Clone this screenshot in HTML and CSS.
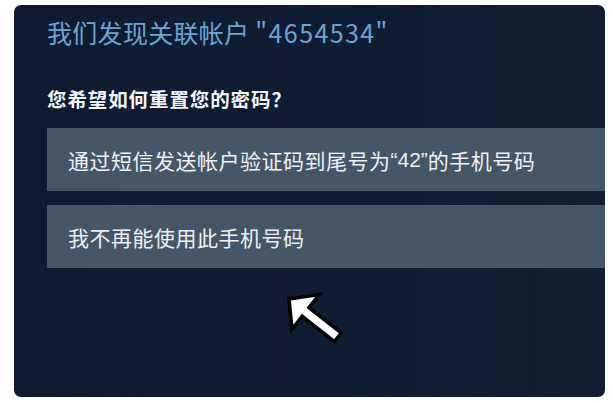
FILE: index.html
```html
<!DOCTYPE html>
<html lang="zh-CN">
<head>
<meta charset="utf-8">
<link rel="stylesheet" href="styles.css">
</head>
<body>
<div class="panel">
  <h1 class="title">我们发现关联帐户 <span class="num">"4654534"</span></h1>
  <p class="question">您希望如何重置您的密码？</p>
  <div class="options">
    <div class="option">通过短信发送帐户验证码到尾号为<span class="q">“42”</span>的手机号码</div>
    <div class="option">我不再能使用此手机号码</div>
  </div>
  <svg class="cursor" width="80" height="70" viewBox="0 0 80 70">
    <g transform="translate(12 10) rotate(38)">
      <polygon points="0,0 21,-22 21,-5.5 62,-5.5 62,5.5 21,5.5 21,22" fill="#fff" stroke="#000" stroke-width="3.5" stroke-linejoin="miter"/>
    </g>
  </svg>
</div>
</body>
</html>
```
FILE: styles.css
```css
html, body {
  margin: 0;
  padding: 0;
  background: #ffffff;
}
body {
  font-family: "Noto Sans CJK SC", "Noto Sans", sans-serif;
}
.panel {
  position: relative;
  margin: 5px 0 0 14px;
  width: 591px;
  height: 392px;
  box-sizing: border-box;
  padding: 10px 0 0 33px;
  background: linear-gradient(90deg, #0f1b30 0%, #0f1d33 60%, #111d30 100%);
  border-radius: 7px;
  overflow: hidden;
}
.title {
  margin: 0;
  font-size: 25px;
  line-height: 34px;
  font-weight: 400;
  color: #6aa5d2;
  letter-spacing: 0.3px;
}
.num {
  letter-spacing: 1.4px;
}
.question {
  margin: 37px 0 0 0;
  font-size: 19.5px;
  line-height: 26px;
  font-weight: 700;
  color: #f2f4f6;
  letter-spacing: 0.9px;
}
.options {
  margin-top: 16px;
  display: flex;
  flex-direction: column;
  gap: 14px;
}
.option {
  height: 63px;
  display: flex;
  align-items: center;
  padding-left: 21px;
  background: #465669;
  color: #eef0f3;
  font-size: 21px;
  letter-spacing: 0.5px;
}
.q {
  font-family: "Liberation Sans", sans-serif;
  letter-spacing: 0;
}
.cursor {
  position: absolute;
  left: 263px;
  top: 284px;
}
```
